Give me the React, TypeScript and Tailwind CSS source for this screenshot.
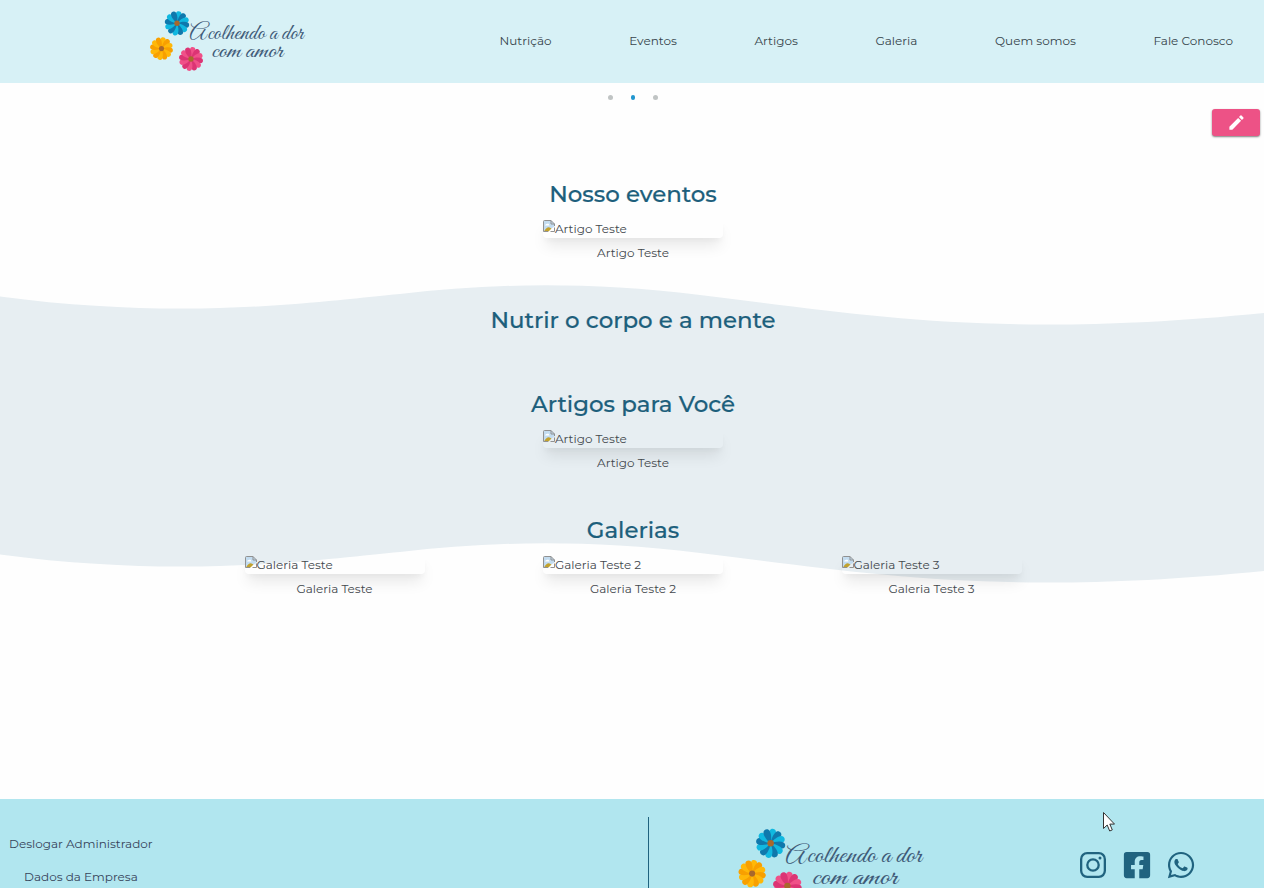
import type { ReactNode } from "react";
import { FaFacebookSquare, FaWhatsapp } from "react-icons/fa";
import { MdEdit } from "react-icons/md";

function Flower({ x, y, r, a, b }: { x: number; y: number; r: number; a: string; b: string }) {
  return (
    <g transform={`translate(${x} ${y}) scale(${r / 12})`}>
      {Array.from({ length: 12 }, (_, i) => (
        <path
          key={i}
          d="M0 0C-1.800-3-3.300-7-2.500-10C-1.800-12.300 1.800-12.300 2.500-10C3.300-7 1.800-3 0 0Z"
          transform={`rotate(${i * 30 + 10})`}
          fill={i % 2 ? a : b}
        />
      ))}
      <circle r={2.6} fill="#a8682c" />
    </g>
  );
}

function Logo({ className }: { className: string }) {
  return (
    <svg viewBox="148 8 164 66" className={className} role="img">
      <Flower x={177} y={23.300} r={12.600} a="#0f78ac" b="#10b8e0" />
      <Flower x={161.500} y={48.600} r={11.800} a="#f8a000" b="#ffb808" />
      <Flower x={191} y={59} r={12.400} a="#dc3474" b="#f05088" />
      <g fill="#3f5b78" fontFamily="'Great Vibes', 'Dancing Script', 'Liberation Serif', cursive" fontSize={21.500}>
        <text x={189.500} y={38.500} textLength={114} lengthAdjust="spacingAndGlyphs">Acolhendo a dor</text>
        <text x={211.500} y={57} textLength={71.500} lengthAdjust="spacingAndGlyphs">com amor</text>
      </g>
    </svg>
  );
}

function BrokenImage() {
  return (
    <svg viewBox="0 0 12 14" className="h-[14px] w-[12px] shrink-0">
      <path d="M.5 11.500V1.500q0-1 1-1H8l3.500 3.500v2.500L3.500 11.500z" fill="#c3dcf0" />
      <path d="M2 5.500q.5-2 2-1.500 1.500-1.500 2.500 1.500z" fill="#fff" />
      <path d="M1 11.500q3-5 5.500-4l2 1L5.500 11.500z" fill="#c2a22e" />
      <path d="M.5 11.500V1.500q0-1 1-1H8l3.500 3.500V6M8 .5V4h3.500M.5 11.500H5M7.500 11.500h4V7.500" fill="none" stroke="#919191" />
    </svg>
  );
}

function Card({ title }: { title: string }) {
  return (
    <div className="flex w-[180px] flex-col items-center">
      <div className="flex h-[18px] w-full rounded shadow-[0_10px_15px_-3px_rgba(0,0,0,0.1),0_4px_6px_-2px_rgba(0,0,0,0.05)]">
        <BrokenImage />
        <span className="whitespace-nowrap leading-[18px]">{title}</span>
      </div>
      <span className="mt-[6px] whitespace-nowrap leading-[18px]">{title}</span>
    </div>
  );
}

function Section({ title, className, children }: { title: string; className: string; children?: ReactNode }) {
  return (
    <section className={`flex flex-col items-center pl-[2px] ${className}`}>
      <h2 className="h-8 whitespace-nowrap text-[22.900px] font-medium leading-[33px] text-[#1d5f7c] [-webkit-text-stroke:0.2px_#1d5f7c]">{title}</h2>
      {children}
    </section>
  );
}

export default function App() {
  return (
    <div className="relative flex h-[888px] w-[1264px] flex-col overflow-hidden bg-[#fefefe] font-['Montserrat',Inter,sans-serif] text-[12px] text-[#43484d]">
      <header className="flex h-[83px] shrink-0 bg-[#d7f1f6] pl-[148px] pt-2 text-[#36444b]">
        <Logo className="h-[66px] w-[164px]" />
        <nav className="ml-[187.500px] mr-[31px] mt-[24px] flex h-[18px] grow justify-between whitespace-nowrap leading-[18px]">
          <a>Nutrição</a>
          <a>Eventos</a>
          <a>Artigos</a>
          <a>Galeria</a>
          <a>Quem somos</a>
          <a>Fale Conosco</a>
        </nav>
      </header>

      <main className="relative h-[716px] shrink-0">
        <svg viewBox="0 0 1264 300" className="absolute left-0 top-[202px] h-[300px] w-[1264px]">
          <path
            d="M0 11.500C190 37 330 15 400 9C490-1 580-4.500 700 10C870 31 1000 54 1264 28V286C1000 312 870 289 700 268C580 253.500 490 257 400 267C330 273 190 295 0 269.500Z"
            fill="#e7eef2"
          />
        </svg>
        <div className="relative flex h-full flex-col">
          <div className="mt-[12px] flex justify-center gap-[18px] pl-[2px]">
            <i className="size-[4.500px] rounded-full bg-[#c0c4c4]" />
            <i className="size-[4.500px] rounded-full bg-[#2196cf]" />
            <i className="size-[4.500px] rounded-full bg-[#c0c4c4]" />
          </div>
          <button className="ml-auto mr-1 mt-[9.500px] flex h-[27px] w-12 items-center justify-center rounded-[3px] bg-[#ed5286] text-white shadow-[0_1px_2px_rgba(0,0,0,0.5)]">
            <MdEdit size={19} />
          </button>
          <Section title="Nosso eventos" className="mt-[42px] h-[126px]">
            <div className="mt-[10px]"><Card title="Artigo Teste" /></div>
          </Section>
          <Section title="Nutrir o corpo e a mente" className="h-[84px]" />
          <Section title="Artigos para Você" className="h-[126px]">
            <div className="mt-[10px]"><Card title="Artigo Teste" /></div>
          </Section>
          <Section title="Galerias" className="">
            <div className="mt-[10px] flex gap-[118.500px]">
              <Card title="Galeria Teste" />
              <Card title="Galeria Teste 2" />
              <Card title="Galeria Teste 3" />
            </div>
          </Section>
        </div>
      </main>

      <footer className="flex h-[89px] shrink-0 overflow-hidden bg-[#b1e6ef] text-[#36445a]">
        <div className="mt-[18px] flex h-[140px] w-[649px] shrink-0 flex-col border-r border-[#20637f] pt-[18px] leading-[18px]">
          <a className="ml-[9px]">Deslogar Administrador</a>
          <a className="ml-[24px] mt-[15px]">Dados da Empresa</a>
        </div>
        <Logo className="ml-[86.500px] mt-[26px] h-[79px] w-[196px] shrink-0" />
        <div className="ml-[148px] mt-[52px] flex text-[#20637f]">
          <svg viewBox="0 0 26 28" className="h-7 w-[26px]" fill="none" stroke="currentColor" strokeWidth={2.300}>
            <rect x="1.150" y="2.150" width="23.700" height="23.700" rx="6" />
            <circle cx="13" cy="14" r="5.700" />
            <circle cx="20" cy="7" r="1.500" fill="currentColor" stroke="none" />
          </svg>
          <FaFacebookSquare size={30} className="-mt-px ml-[16.500px]" />
          <FaWhatsapp size={30} className="-mt-px ml-[13.500px]" />
        </div>
      </footer>

      <svg viewBox="0 0 12 20" className="absolute left-[1103px] top-[812px] h-5 w-3">
        <path d="M.5.5v16l3.700-3.500 2.500 6 2.600-1.100-2.500-5.800H11.500z" fill="#fff" stroke="#333" />
      </svg>
    </div>
  );
}
